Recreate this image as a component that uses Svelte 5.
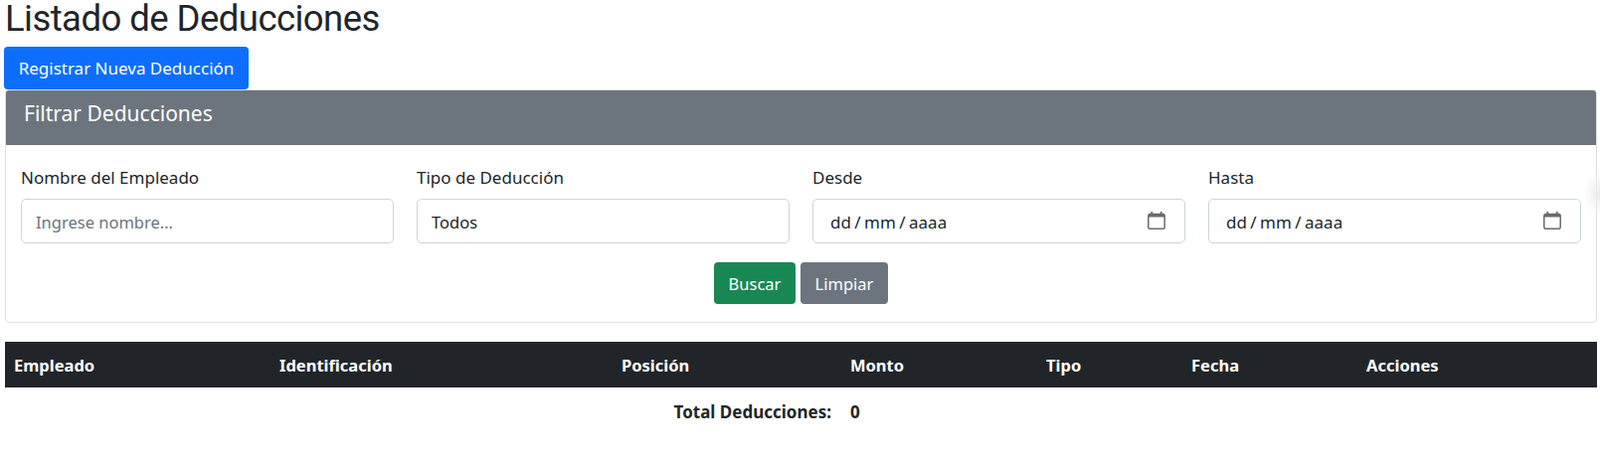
<script>
  const filters = [
    { label: 'Nombre del Empleado', kind: 'text' },
    { label: 'Tipo de Deducción', kind: 'select' },
    { label: 'Desde', kind: 'date' },
    { label: 'Hasta', kind: 'date' }
  ];
  const columns = ['Empleado', 'Identificación', 'Posición', 'Monto', 'Tipo', 'Fecha', 'Acciones'];
</script>

<main class="page">
  <h1>Listado de Deducciones</h1>
  <button class="btn primary new">Registrar Nueva Deducción</button>

  <section class="card">
    <header class="card-head">Filtrar Deducciones</header>
    <div class="card-body">
      <div class="fields">
        {#each filters as f}
          <div class="field">
            <span class="label">{f.label}</span>
            {#if f.kind === 'text'}
              <div class="control placeholder">Ingrese nombre...</div>
            {:else if f.kind === 'select'}
              <div class="control">Todos</div>
            {:else}
              <div class="control date">
                <span class="date-text">dd / mm / aaaa</span>
                <svg class="cal" viewBox="0 0 18 18" width="18" height="18" aria-hidden="true">
                  <rect x="0.800" y="2.500" width="16.400" height="14.800" rx="1.800" fill="none" stroke="#6b6b6b" stroke-width="1.500"/>
                  <path fill="#6b6b6b" d="M1 2.200h16v3.300H1zM3.400 0h1.800v3H3.400zM12.800 0h1.800v3h-1.800z"/>
                </svg>
              </div>
            {/if}
          </div>
        {/each}
      </div>
      <div class="actions">
        <button class="btn success">Buscar</button>
        <button class="btn secondary">Limpiar</button>
      </div>
    </div>
  </section>

  <table>
    <thead>
      <tr>
        {#each columns as c}<th>{c}</th>{/each}
      </tr>
    </thead>
    <tfoot>
      <tr>
        <td colspan="3" class="total-label">Total Deducciones:</td>
        <td colspan="4" class="total-value">0</td>
      </tr>
    </tfoot>
  </table>
  <div class="edge-shade"></div>
</main>

<style>
  :global(body) {
    margin: 0;
    background: #fff;
    overflow: hidden;
  }
  .page {
    position: relative;
    box-sizing: border-box;
    width: 1609px;
    height: 461px;
    overflow: hidden;
    padding: 0 3px 0 5px;
    font-family: "Noto Sans", "Open Sans", sans-serif;
    font-size: 16.500px;
    color: #212529;
  }
  h1 {
    margin: 0;
    height: 47px;
    font-family: Roboto, "Noto Sans", sans-serif;
    font-size: 36.500px;
    font-weight: 400;
    letter-spacing: -0.550px;
    line-height: 38px;
  }
  .btn {
    font: inherit;
    color: #fff;
    border: 0;
    border-radius: 4px;
    padding: 0;
    height: 42px;
  }
  .primary { background: #0d6efd; }
  .success { background: #198754; width: 82px; }
  .secondary { background: #6c757d; width: 88px; }
  .new {
    display: block;
    margin-left: -1px;
    width: 246px;
    height: 43px;
    font-size: 17px;
  }
  .card {
    border: 1px solid #dfe0e1;
    border-radius: 4px;
    overflow: hidden;
    height: 235px;
    box-sizing: border-box;
    margin-bottom: 19px;
  }
  .card-head {
    background: #6c757d;
    color: #fff;
    height: 55px;
    line-height: 46px;
    padding-left: 18px;
    font-size: 21px;
  }
  .card-body {
    padding: 20px 15px 0;
  }
  .fields {
    display: grid;
    grid-template-columns: repeat(4, 375px);
    column-gap: 23px;
  }
  .label {
    display: block;
    height: 34px;
    line-height: 26px;
    font-size: 17px;
  }
  .control {
    box-sizing: border-box;
    height: 45px;
    border: 1px solid #ced4da;
    border-radius: 5px;
    padding: 1px 14px 0;
    display: flex;
    align-items: center;
  }
  .placeholder { color: #6c757d; }
  .date { justify-content: space-between; padding: 1px 19px 0 17px; }
  .date-text { word-spacing: -1px; font-size: 17px; }
  .cal { flex: none; margin-top: -3px; }
  .actions {
    display: flex;
    justify-content: center;
    gap: 5px;
    margin-top: 19px;
  }
  table {
    width: 100%;
    border-collapse: collapse;
    table-layout: fixed;
  }
  th {
    box-sizing: border-box;
    background: #212529;
    color: #fff;
    height: 46px;
    padding: 0 0 0 9px;
    text-align: left;
    font-weight: 700;
  }
  th:nth-child(1) { width: 267px; }
  th:nth-child(2) { width: 344px; }
  th:nth-child(3) { width: 230px; }
  th:nth-child(4) { width: 197px; }
  th:nth-child(5) { width: 146px; }
  th:nth-child(6) { width: 176px; }
  .total-label,
  .total-value {
    font-weight: 700;
    padding: 13px 9px 0;
    line-height: 24px;
    font-size: 17px;
  }
  .total-label { text-align: right; padding-right: 10px; }
  .edge-shade {
    position: absolute;
    right: -14px;
    top: 172px;
    width: 30px;
    height: 46px;
    border-radius: 50%;
    background: radial-gradient(closest-side, #ececec, rgba(255, 255, 255, 0));
    pointer-events: none;
  }
</style>
